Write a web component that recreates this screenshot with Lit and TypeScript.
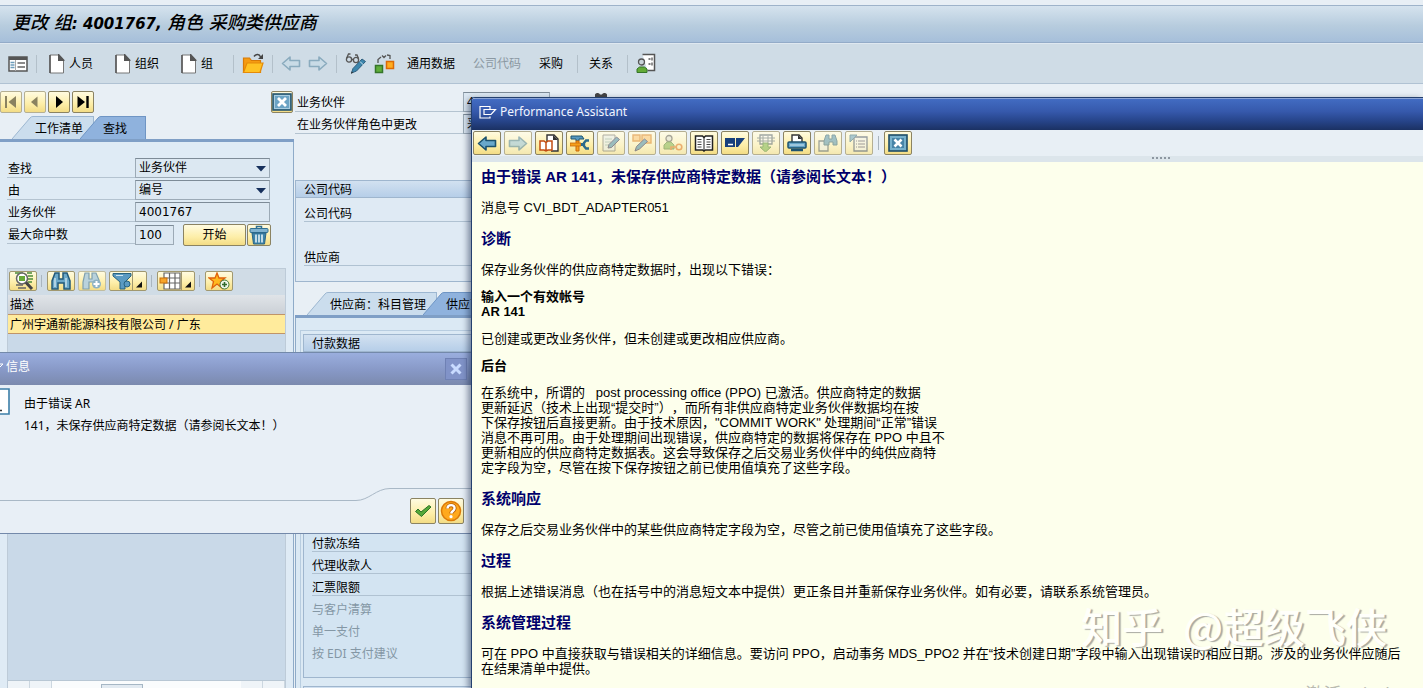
import { LitElement, html, svg, css, TemplateResult } from "lit";
import { customElement, property } from "lit/decorators.js";
import { classMap } from "lit/directives/class-map.js";

const leftArrow = (fill: string, stroke: string) => svg`<path d="M1.5 8.500 9 2v3.500h9.500v6H9V15z" fill=${fill} stroke=${stroke} stroke-width="1.600" stroke-linejoin="round"/>`;
const rightArrow = (fill: string, stroke: string) => svg`<path d="M18.500 8.500 11 2v3.500H1.500v6H11V15z" fill=${fill} stroke=${stroke} stroke-width="1.600" stroke-linejoin="round"/>`;

const glyphs: Record<string, { w: number; h: number; art: unknown }> = {
  list: { w: 20, h: 18, art: svg`<rect x="1" y="2" width="18" height="14" fill="#fff" stroke="#555" stroke-width="1.500"/><rect x="1" y="2" width="18" height="3" fill="#555"/><path d="M2.500 7.500h4M2.500 10h4M2.500 12.500h4" stroke="#6d9cba" stroke-width="1.500"/><path d="M7.500 5v11" stroke="#aaa"/><path d="M9.500 8h7.500M9.500 12h7.500" stroke="#666" stroke-width="1.500"/>` },
  doc: { w: 16, h: 20, art: svg`<path d="M1 1h8.500l5 5V19H1z" fill="#fff" stroke="#777" stroke-width="1"/><path d="M1 1v18" stroke="#555" stroke-width="1.500"/><path d="M9 0h1l5.500 6v1H9z" fill="#555"/>` },
  folder: { w: 22, h: 22, art: svg`<path d="M1.500 19.500V5h6l2 2.500h9v12z" fill="#f59b12" stroke="#d87a07" stroke-width="1.200"/><path d="M1.500 19.500 5 10h16l-3 9.500z" fill="#ffc223" stroke="#e58a08" stroke-width="1.200"/><path d="M12 3.500c2-3 5.500-2.500 6.500.5" fill="none" stroke="#444" stroke-width="1.400"/><path d="M21 1v5h-5z" fill="#444"/>` },
  prev: { w: 20, h: 17, art: leftArrow("#c9dbe6", "#8aabbe") },
  next: { w: 20, h: 17, art: rightArrow("#c9dbe6", "#8aabbe") },
  toggle: { w: 22, h: 22, art: svg`<g fill="none" stroke="#555" stroke-width="1.300"><circle cx="4" cy="6.500" r="2.600"/><circle cx="11" cy="7" r="2.600"/><path d="M1.500 5.500 3.500 1h2M13.500 5.500 12 2h-2M6.500 6.500h2"/></g><path d="M6.500 20 8 15.500 17 6l3.500 2.500-9 9.500z" fill="#3c86ad" stroke="#2d5d7c"/><path d="M15 8.500 18.500 12" stroke="#cfe4ef"/><path d="M6 21l.6-2.500 1.500 1z" fill="#333"/>` },
  relate: { w: 22, h: 22, art: svg`<rect x="1.500" y="12.500" width="7" height="7" fill="#5fae3a" stroke="#35752a" stroke-width="1.500"/><rect x="12.500" y="8.500" width="7" height="7" fill="#ffad1f" stroke="#dc6a05" stroke-width="1.500"/><path d="M4 10V6.500l3-2.500M8 2.500l2 2 2-2M13 2l3 .5V6" fill="none" stroke="#555" stroke-width="1.300"/>` },
  person: { w: 20, h: 22, art: svg`<path d="M6.500 1.500h12v16h-7" fill="#fff" stroke="#555" stroke-width="1.500"/><path d="M12.500 6h2M12.500 11h2M16 4.500v3M16 9.500v3" stroke="#555" stroke-width="1.300"/><circle cx="5.500" cy="9" r="3" fill="#c9d4da" stroke="#555" stroke-width="1.300"/><path d="M1 19v-3l2.500-2h5l2.500 2v3.500H1z" fill="#63ab37" stroke="#35752a"/>` },
  first: { w: 16, h: 16, art: svg`<path d="M3 2v12" stroke="#8a8260" stroke-width="2"/><path d="M13 2v12L5.500 8z" fill="#8a8260"/>` },
  back: { w: 16, h: 16, art: svg`<path d="M10.500 2.500v11L4 8z" fill="#8a8260"/>` },
  forward: { w: 16, h: 16, art: svg`<path d="M5 2v12l7-6z" fill="#000"/>` },
  last: { w: 16, h: 16, art: svg`<path d="M2.500 2v12L10 8z" fill="#000"/><path d="M12.500 2v12" stroke="#000" stroke-width="2.400"/>` },
  close: { w: 20, h: 18, art: svg`<rect x="1" y="1" width="18" height="16" fill="#6ba3c4" stroke="#27566f" stroke-width="1.600"/><rect x="2.500" y="2.500" width="15" height="13" fill="none" stroke="#a9cde0"/><path d="M6 5 14 13M14 5 6 13" stroke="#fff" stroke-width="2.800"/>` },
  trash: { w: 20, h: 20, art: svg`<path d="M7.500 3.500V1.500h5v2" fill="none" stroke="#2f6f92" stroke-width="1.500"/><rect x="1" y="3.500" width="18" height="4" rx="1" fill="#7fb2cf" stroke="#2f6f92"/><path d="M3 8h14l-1.500 11H4.500z" fill="#3d83a9" stroke="#2a6485"/><path d="M7 9.500v8M10 9.500v8M13 9.500v8" stroke="#e3f0f6" stroke-width="1.600"/>` },
  detail: { w: 22, h: 18, art: svg`<path d="M3 1h8M15 1h5M16 4h5M16 7h5M16 10h4" stroke="#4c8c3a" stroke-width="1.300"/><circle cx="10" cy="6.500" r="5.500" fill="#fff" stroke="#666" stroke-width="1.500"/><rect x="7" y="4" width="6" height="5" fill="#67a939"/><path d="M14 10.500 20 17" stroke="#444" stroke-width="3"/><path d="M4 13h7M6 16h8" stroke="#666" stroke-width="1.500"/>` },
  find: { w: 20, h: 18, art: svg`<path d="M4 1h4v6h4V1h4l3 8v8h-6v-6H7v6H1V9z" fill="#6ba8c9" stroke="#23597a" stroke-width="1.500"/><path d="M4 6v9M15 6v9" stroke="#c5dfec" stroke-width="1.500"/>` },
  findNext: { w: 20, h: 18, art: svg`<path d="M3 1h4v6h3V1h4l3 7v3h-4l-2-1H7v7H1v-7z" fill="#b9d2dc" stroke="#7fa0ae" stroke-width="1.200"/><circle cx="14.500" cy="12" r="4.500" fill="#8eb3c4"/><path d="M14.500 9v6M11.500 12h6" stroke="#fff" stroke-width="2"/>` },
  filter: { w: 20, h: 18, art: svg`<path d="M1 1.500h18v2.500l-6 6v7H8v-7L1 4z" fill="#5b9ac2" stroke="#28627f"/><path d="M4 3.500h7" stroke="#cfe6f2"/><circle cx="15" cy="12" r="3" fill="#5b9ac2" stroke="#28627f"/>` },
  layout: { w: 22, h: 18, art: svg`<path d="M5 1h16v16H5zM5 6h16M5 11h16M10.500 1v16M16 1v16" fill="#fff" stroke="#666" stroke-width="1.200"/><rect x="1" y="6" width="7" height="5" fill="#f6a52a" stroke="#c96f0a"/>` },
  corner: { w: 10, h: 18, art: svg`<path d="M8.500 9.500v6h-6z" fill="#111"/>` },
  star: { w: 22, h: 18, art: svg`<path d="m9 1 2 5h6l-4.500 3.500L14 16 9 12l-5 4 1.500-6.500L1 6h6z" fill="#ffb91f" stroke="#e0620b" stroke-width="1.300"/><circle cx="16.500" cy="12.500" r="4.500" fill="#eef5ea" stroke="#3f7a35"/><path d="M16.500 10v5M14 12.500h5" stroke="#2f6a2b" stroke-width="1.600"/>` },
  arrowL: { w: 20, h: 17, art: leftArrow("#69a8cb", "#1d526e") },
  arrowR: { w: 20, h: 17, art: rightArrow("#8fc0de", "#3d7796") },
  help: { w: 20, h: 18, art: svg`<path d="M8 8V1h7l4 4v12h-7" fill="#fff" stroke="#333" stroke-width="1.400"/><path d="M14 1v5h5z" fill="#333"/><path d="M1 7h4l2 1.500L9 7h4v9H9l-2 1-2-1H1zM7 8.500V17" fill="#fff" stroke="#c24b12" stroke-width="1.500"/>` },
  tools: { w: 20, h: 18, art: svg`<path d="M1 2h11l2 3H9v2H6V5H1z" fill="#5798bd" stroke="#1f5673"/><path d="M6 7h3v10H6z" fill="#f6a01a" stroke="#c8680a"/><path d="M0 9h11v3H0z" fill="#f6a01a" stroke="#c8680a" stroke-width=".8"/><path d="M19 6.500h-3L14 9v3l2 2.500h3" fill="none" stroke="#2c6a8b" stroke-width="2.400"/><path d="M11 10.500h3" stroke="#2c6a8b" stroke-width="3"/>` },
  edit: { w: 20, h: 18, art: svg`<path d="M2 1h12v16H2z" fill="#e6edee" stroke="#666"/><path d="M4 5h7M4 8h6M4 11h4" stroke="#8aa"/><path d="M7 14 8 10.500 15.500 3l3 2.500-8 8z" fill="#3c86ad" stroke="#225"/>` },
  note: { w: 20, h: 18, art: svg`<path d="M1 1h7v6H1zM10 1h9v8h-9z" fill="#fbc070" stroke="#d77a18" stroke-width="1.400"/><path d="M3 17 4.500 12.500 12.500 5l3 2.500-8 7.500z" fill="#3c86ad" stroke="#225"/>` },
  userKey: { w: 20, h: 18, art: svg`<circle cx="6" cy="4.500" r="3" fill="#dfe3da" stroke="#555" stroke-width="1.300"/><path d="M1 15V11l3-3h4l3 3v4z" fill="#7bb24e" stroke="#4a7b35"/><circle cx="16" cy="13" r="2.800" fill="none" stroke="#dd6d1b" stroke-width="1.600"/><path d="M13 13H8v3" stroke="#dd6d1b" stroke-width="1.600" fill="none"/>` },
  book: { w: 20, h: 18, art: svg`<path d="M1.500 2h7l1.500 1.500L11.500 2h7v14h-7L10 17l-1.500-1h-7z" fill="#fff" stroke="#222" stroke-width="1.500"/><path d="M10 3v13" stroke="#222"/><path d="M3.500 5.500h4M3.500 8h4M3.500 10.500h4M3.500 13h4M12.500 5.500h4M12.500 8h4M12.500 10.500h4M12.500 13h4" stroke="#444"/>` },
  term: { w: 20, h: 18, art: svg`<path d="M0 4h10v9H0zM11 4h9L13 13h-2z" fill="#173f7d"/><path d="M3 10.500h5" stroke="#fff" stroke-width="1.500"/>` },
  send: { w: 20, h: 18, art: svg`<path d="M4 1h12v9H4z" fill="#fff" stroke="#456" stroke-width="1.300"/><path d="M1 4h18M1 7h18M7 2v8M12 2v8" stroke="#567"/><path d="M7 9h5v4h3l-5.500 5L4 13h3z" fill="#74b44c" stroke="#3d7a2f"/>` },
  print: { w: 20, h: 18, art: svg`<path d="M5 9V1h7l3 3v5" fill="#fff" stroke="#333" stroke-width="1.400"/><path d="M11 1v4h4z" fill="#333"/><rect x="1" y="8" width="18" height="6" rx="1" fill="#66a5c8" stroke="#1d526e" stroke-width="1.500"/><path d="M4 16h12" stroke="#1d526e" stroke-width="2.400"/><path d="M3 11h14" stroke="#d5e9f2"/>` },
  search: { w: 20, h: 18, art: svg`<path d="M1 7h9v10H1z" fill="#eef2f0" stroke="#456" stroke-width="1.300"/><path d="M8 1h3v4h3V1h3l2 6v4h-4V8h-4v3H6V7z" fill="#4a8db3" stroke="#1f5673"/>` },
  outline: { w: 20, h: 18, art: svg`<path d="M5 3h13v14H5z" fill="#f2f4f0" stroke="#346" stroke-width="1.300"/><path d="M9 7h7M9 10h7M9 13h7M7 7h1M7 10h1M7 13h1" stroke="#446"/><path d="M1 1h7L1 8z" fill="#5b9ac2" stroke="#28627f"/>` },
  exit: { w: 20, h: 18, art: svg`<rect x="1" y="1" width="18" height="16" fill="#77b1cc" stroke="#1d4c66" stroke-width="1.600"/><rect x="4" y="4" width="12" height="10" fill="#4784a7"/><path d="m6.500 5.500 7 7M13.500 5.500l-7 7" stroke="#fff" stroke-width="2.600"/>` },
  dialogClose: { w: 14, h: 14, art: svg`<path d="M2.500 2.500 11.500 11.500M11.500 2.500l-9 9" stroke="#c9dbff" stroke-width="3"/>` },
  ok: { w: 18, h: 18, art: svg`<path d="m1.500 9.500 2.500-2.500 3 3L15 3.500l2 1.500-9.500 9.500z" fill="#55a838" stroke="#2c7427"/>` },
  question: { w: 22, h: 22, art: svg`<circle cx="11" cy="11" r="9.500" fill="#ffa91d" stroke="#dc7a08" stroke-width="1.500"/><path d="M7.500 8.500c0-4.500 7.500-4.500 7 0 0 2.500-3 2.500-3.300 5" fill="none" stroke="#b55c05" stroke-width="4"/><path d="M7.500 8.500c0-4.500 7.500-4.500 7 0 0 2.500-3 2.500-3.300 5" fill="none" stroke="#fff" stroke-width="2.400"/><circle cx="11" cy="16.700" r="1.600" fill="#fff"/>` },
  windowMark: { w: 18, h: 14, art: svg`<path d="M11 11.500v1.500H1V1.500h10V4" fill="none" stroke="#fff" stroke-width="1.200"/><path d="M5 4.500h11.500L12 9.500H5z" fill="none" stroke="#fff" stroke-width="1.200"/>` },
  lens: { w: 16, h: 14, art: svg`<path d="M2 2.500c1-2 4-2 5 0h2c1-2 4-2 5 0v11H9V7H7v6H2z" fill="#444"/>` },
  message: { w: 10, h: 28, art: svg`<path d="M-4 1H9v25H-4" fill="#fff" stroke="#3c7fa8" stroke-width="1.600"/><path d="M0 22.500h2" stroke="#333" stroke-width="1.500"/>` },
  caret: { w: 12, h: 8, art: svg`<path d="M1 1h10L6 6.500z" fill="#16305c"/>` },
};

function glyph(name: string): TemplateResult {
  const g = glyphs[name];
  return html`<svg class="glyph" width=${g.w} height=${g.h} viewBox="0 0 ${g.w} ${g.h}" aria-hidden="true">${g.art}</svg>`;
}

const base = css`
  * { box-sizing: border-box; }
  svg { display: block; flex: none; }
  button, input, select { font: inherit; color: inherit; margin: 0; border-radius: 0; }
  button { padding: 0; background: none; border: 0; white-space: nowrap; }
  .key {
    display: inline-flex; align-items: center; justify-content: center; flex: none;
    height: 22px; width: 22px; border: 1px solid #8b8362; border-radius: 2px;
    background: linear-gradient(#fffbe0, #fdeea8 60%, #f3dc85);
  }
  .key.dim { border-color: #b5af92; }
`;

interface TabItem { label: string; active?: boolean }

@customElement("sap-tabs")
class SapTabs extends LitElement {
  @property({ attribute: false }) items: TabItem[] = [];
  static styles = [base, css`
    :host { display: flex; height: 26px; border-bottom: 3px solid #7f9fc6; overflow: hidden; }
    .tab { display: flex; height: 23px; position: relative; }
    .tab + .tab { margin-left: -14px; }
    .face { padding: 2px 10px 0 2px; line-height: 20px; border: 1px solid #9db7d1; border-width: 1px 1px 0 0; background: #cbdded; }
    .active .face { background: #8fb2dd; border-color: #6f95c4; padding-right: 18px; }
    .slope { fill: #cbdded; stroke: #9db7d1; }
    .active .slope { fill: #8fb2dd; stroke: #6f95c4; }
  `];
  render() {
    return this.items.map(t => html`<button class=${classMap({ tab: true, active: !!t.active })}>
      <svg width="21" height="23" aria-hidden="true"><path class="slope" d="M0 23 18 2q1-1.500 3-1.500h2V23"/></svg>
      <span class="face">${t.label}</span></button>`);
  }
}

@customElement("sap-toolbar")
class SapToolbar extends LitElement {
  static styles = [base, css`
    :host { display: flex; align-items: center; height: 41px; background: #cfdce6; border-bottom: 1px solid #b0c2d3; border-top: 1px solid #dfe8f0; }
    .group { display: flex; align-items: center; height: 18px; padding: 0 8px; gap: 7px; border-left: 1px solid #b3c0ca; }
    .group:first-child { border-left: 0; }
    .docs { gap: 22px; padding: 0 20px 0 12px; }
    .tight { padding-right: 0; }
    .words { padding: 0 14px 0 11px; gap: 18px; border: 0; }
    .lined { border-left: 1px solid #b3c0ca; }
    button { display: flex; align-items: center; gap: 4px; line-height: 20px; }
    button:disabled { color: #8b98a2; }
  `];
  render() {
    return html`
      <div class="group"><button aria-label="列表">${glyph("list")}</button></div>
      <div class="group docs">${["人员", "组织", "组"].map(t => html`<button>${glyph("doc")}${t}</button>`)}</div>
      <div class="group"><button aria-label="打开">${glyph("folder")}</button></div>
      <div class="group"><button aria-label="后退">${glyph("prev")}</button><button aria-label="前进">${glyph("next")}</button></div>
      <div class="group tight"><button aria-label="显示/更改">${glyph("toggle")}</button><button aria-label="关系图">${glyph("relate")}</button></div>
      <div class="group words"><button>通用数据</button><button disabled>公司代码</button><button>采购</button></div>
      <div class="group words lined"><button>关系</button></div>
      <div class="group"><button aria-label="合作伙伴">${glyph("person")}</button></div>`;
  }
}

@customElement("partner-search")
class PartnerSearch extends LitElement {
  static styles = [base, css`
    :host { display: flex; flex-direction: column; min-width: 0; }
    .nav { display: flex; gap: 2px; padding: 7px 1px 3px 0; }
    .nav .end { margin-left: auto; }
    sap-tabs { padding-left: 12px; flex: none; }
    .panel { flex: 1; display: flex; flex-direction: column; background: #dfebf5; border-right: 1px solid #8fabc8; padding: 16px 7px 0 7px; }
    .form { display: grid; gap: 2px; }
    .row { display: grid; grid-template-columns: 128px 135px; height: 20px; }
    .row label { border-bottom: 1px solid #b4c3d0; padding-left: 1px; line-height: 22px; height: 20px; }
    .field { border: 1px solid #9caab6; border-top-color: #7d8b97; background: #dce8f2; height: 20px; width: 100%; padding: 0 3px; outline: none; }
    input.field { font-family: "DejaVu Sans", sans-serif; }
    .pick { position: relative; display: block; }
    .pick select { appearance: none; line-height: 18px; }
    .pick svg { position: absolute; right: 3px; top: 7px; }
    .limit { display: flex; align-items: center; gap: 1px; }
    .limit .field { width: 39px; margin-right: 8px; flex: none; }
    .start { width: 63px; }
    .trash { width: 24px; }
    .results { flex: 1; display: flex; flex-direction: column; margin-top: 24px; background: #c9d9e8; border: 1px solid #bdcbd8; border-bottom: 0; }
    .bar { display: flex; height: 26px; flex: none; gap: 3px; padding: 2px 0 0 1px; background: #d0dce6; }
    .bar .key { width: 28px; height: 20px; border-color: #a1986f; }
    .bar .key.dim { border-color: #c1bda0; }
    .bar .key.split { width: 38px; }
    .split svg + svg { border-left: 1px solid #a1986f; width: 12px; }
    .bar i { width: 1px; height: 12px; background: #aab6c0; margin: 4px 2px 0 1px; }
    table { border-collapse: collapse; width: 100%; }
    th { text-align: left; font-weight: normal; height: 19px; padding: 0 2px; line-height: 19px; background: linear-gradient(#e0e4e8, #cbd0d6); }
    td { height: 19px; padding: 0 2px; line-height: 17px; background: #ffeb9c; border: 1px solid #c09468; border-width: 1px 0; }
    .scroll { margin-top: auto; height: 8px; flex: none; display: flex; background: #fafcfd; border-top: 1px solid #b8c7d4; }
    .scroll b { width: 22px; border-right: 1px solid #ccd7e0; background: #eff4f8; }
    .scroll u { width: 42px; margin: 3px auto 0 49px; border: 1px solid #a6b7c5; border-bottom: 0; background: #e2eaf1; }
  `];
  render() {
    const nav: [string, string, boolean][] = [["first", "第一个", true], ["back", "上一个", true], ["forward", "下一个", false], ["last", "最后一个", false]];
    return html`
      <div class="nav">
        ${nav.map(([i, l, d]) => html`<button class=${classMap({ key: true, dim: d })} aria-label=${l}>${glyph(i)}</button>`)}
        <button class="key end" aria-label="关闭">${glyph("close")}</button>
      </div>
      <sap-tabs .items=${[{ label: "工作清单" }, { label: "查找", active: true }]}></sap-tabs>
      <div class="panel">
        <div class="form">
          <div class="row"><label for="kind">查找</label><span class="pick"><select class="field" id="kind"><option>业务伙伴</option></select>${glyph("caret")}</span></div>
          <div class="row"><label for="by">由</label><span class="pick"><select class="field" id="by"><option>编号</option></select>${glyph("caret")}</span></div>
          <div class="row"><label for="bp">业务伙伴</label><input class="field" id="bp" .value=${"4001767"}></div>
          <div class="row"><label for="max">最大命中数</label><span class="limit"><input class="field" id="max" .value=${"100"}><button class="key start">开始</button><button class="key trash" aria-label="删除">${glyph("trash")}</button></span></div>
        </div>
        <div class="results">
          <div class="bar">
            <button class="key" aria-label="明细">${glyph("detail")}</button><i></i>
            <button class="key" aria-label="查找">${glyph("find")}</button>
            <button class="key dim" aria-label="查找下一个">${glyph("findNext")}</button>
            <button class="key split" aria-label="过滤">${glyph("filter")}${glyph("corner")}</button><i></i>
            <button class="key split" aria-label="布局">${glyph("layout")}${glyph("corner")}</button><i></i>
            <button class="key" aria-label="收藏">${glyph("star")}</button>
          </div>
          <table><thead><tr><th>描述</th></tr></thead><tbody><tr><td>广州宇通新能源科技有限公司 / 广东</td></tr></tbody></table>
          <div class="scroll"><b></b><b></b><u></u><b></b><b></b></div>
        </div>
      </div>`;
  }
}

@customElement("partner-data")
class PartnerData extends LitElement {
  static styles = [base, css`
    :host { display: flex; flex-direction: column; min-width: 0; padding: 8px 0 0 1px; }
    .head { display: grid; gap: 2px; margin-bottom: 46px; flex: none; }
    .row { display: flex; height: 20px; gap: 0; }
    .row label { width: 168px; flex: none; padding-left: 2px; border-bottom: 1px solid #b4c3d0; line-height: 22px; }
    .row input { width: 87px; margin-right: 43px; border: 1px solid #9caab6; border-top-color: #7d8b97; background: #dce8f2; padding: 0 3px; outline: none; }
    .box { border: 1px solid #9fb6ce; background: #dfeaf4; }
    .cap { height: 17px; line-height: 17px; padding-left: 8px; background: linear-gradient(#d2e1f0, #b6cee8); border-bottom: 1px solid #9fb6ce; }
    .company { height: 102px; flex: none; margin-bottom: 10px; }
    .company p, .rows p { margin: 0 0 0 8px; height: 22px; line-height: 27px; border-bottom: 1px solid #b0c2d2; }
    .company p { margin-top: 2px; }
    .company p + p { margin-top: 22px; }
    sap-tabs { padding-left: 12px; flex: none; }
    .panel { flex: 1; border-left: 1px solid #8fabc8; background: #dbe9f4; padding: 12px 0 0 4px; }
    .outer { border: 1px solid #b8cde0; border-width: 1px 0 0 1px; padding: 3px 0 0 2px; }
    .rows { padding: 178px 0 15px; background: #d3e4f2; }
    .inner + .inner { margin-top: 8px; }
    .rows p.off { color: #8497a5; border: 0; }
  `];
  render() {
    return html`
      <div class="head">
        <div class="row"><label for="partner">业务伙伴</label><input id="partner" .value=${"4001767"}>${glyph("lens")}</div>
        <div class="row"><label for="role">在业务伙伴角色中更改</label><input id="role" .value=${"采购类供应商"}></div>
      </div>
      <section class="box company"><div class="cap">公司代码</div><p>公司代码</p><p>供应商</p></section>
      <sap-tabs .items=${[{ label: "供应商：科目管理" }, { label: "供应商：支付交易", active: true }]}></sap-tabs>
      <div class="panel"><div class="outer">
        <section class="box inner"><div class="cap">付款数据</div>
          <div class="rows">
            ${["付款冻结", "代理收款人", "汇票限额"].map(t => html`<p>${t}</p>`)}
            ${["与客户清算", "单一支付", "按 EDI 支付建议"].map(t => html`<p class="off">${t}</p>`)}
          </div>
        </section>
        <section class="box inner"><div class="cap"></div></section>
      </div></div>`;
  }
}

@customElement("info-dialog")
class InfoDialog extends LitElement {
  static styles = [base, css`
    :host { display: flex; flex-direction: column; background: #e8eff6; border: 1px solid #7389aa; border-width: 1px 0; }
    header { display: flex; align-items: center; height: 32px; padding: 0 4px 4px 0; gap: 3px; color: #fff; background: linear-gradient(#9aaede, #8798c6 55%, #7b8aae); }
    header button { margin: 4px 0 0 auto; width: 22px; height: 22px; display: grid; place-items: center; border: 1px solid #6f81b4; background: #8193c8; }
    .body { display: flex; gap: 14px; padding: 3px 0 0; height: 103px; }
    .body p { margin: 5px 0 0; line-height: 22px; }
    footer { position: relative; display: flex; justify-content: flex-end; gap: 2px; padding: 10px 7px 9px 0; }
    .curve { position: absolute; left: 0; right: 0; top: 0; width: 100%; height: 14px; }
    .key { width: 26px; height: 26px; }
  `];
  render() {
    return html`
      <header><svg width="3" height="8" aria-hidden="true"><path d="M0 1h3L0 4" fill="none" stroke="#fff"/></svg>信息<button aria-label="关闭">${glyph("dialogClose")}</button></header>
      <div class="body">${glyph("message")}<p>由于错误 AR<br>141，未保存供应商特定数据（请参阅长文本！）</p></div>
      <footer>
        <svg class="curve" viewBox="0 0 471 14" preserveAspectRatio="none" aria-hidden="true"><path d="M0 12.500h356c13 0 20-12 34-12h81" fill="none" stroke="#a9b8c6"/></svg>
        <button class="key" aria-label="继续">${glyph("ok")}</button>
        <button class="key" aria-label="帮助">${glyph("question")}</button>
      </footer>`;
  }
}

@customElement("performance-assistant")
class PerformanceAssistant extends LitElement {
  static styles = [base, css`
    :host { display: flex; flex-direction: column; border-left: 1px solid #24406e; border-top: 1px solid #24406e; border-radius: 4px 0 0 0; background: #fdffec; box-shadow: -3px 2px 6px rgba(20, 35, 70, .5); overflow: hidden; }
    header { display: flex; align-items: center; gap: 3px; height: 32px; flex: none; padding: 0 7px 5px; color: #f1f5ff; border-top: 1px solid #8aa3d6; background: linear-gradient(#426cc2, #3659ac 40%, #27458b 70%, #1b3163); }
    .tools { display: flex; align-items: center; gap: 3px; height: 26px; flex: none; padding-left: 1px; background: #e8eff5; }
    .key { width: 28px; height: 24px; }
    .key.dim svg { opacity: .5; }
    .key.dim { background: linear-gradient(#fdfbe8, #fbf3c8 60%, #f4e8b0); }
    .tools i { width: 1px; height: 14px; background: #a9b4bd; margin: 0 2px; }
    .grip { height: 6px; flex: none; background: #dce5eb; display: flex; justify-content: center; padding: 1px 0 0 427px; gap: 2px; }
    .grip b { width: 2px; height: 2px; background: #8d97a1; }
    article { flex: 1; padding: 5px 22px 0 9px; font: 13px/15px "Liberation Sans", "Noto Sans CJK SC", sans-serif; text-spacing-trim: space-all; color: #000; white-space: nowrap; }
    h2 { margin: 14px 0; font-size: 15px; line-height: 19px; color: #00006b; }
    h2:first-child { margin-top: 0; }
    p { margin: 12px 0; }
  `];
  render() {
    const tools: [string, string, boolean][] = [
      ["arrowL", "后退", false], ["arrowR", "前进", true], ["help", "应用帮助", false], ["tools", "定制", false], ["edit", "编辑", true],
      ["note", "注释", true], ["userKey", "权限", true], ["book", "文档", false], ["term", "术语", false], ["send", "发送", true],
      ["print", "打印", false], ["search", "查找", true], ["outline", "技术信息", true],
    ];
    return html`
      <header>${glyph("windowMark")}Performance Assistant</header>
      <div class="tools">
        ${tools.map(([i, l, d]) => html`<button class=${classMap({ key: true, dim: d })} aria-label=${l}>${glyph(i)}</button>`)}
        <i></i><button class="key" aria-label="关闭">${glyph("exit")}</button>
      </div>
      <div class="grip">${[0, 1, 2, 3, 4].map(() => html`<b></b>`)}</div>
      <article>
        <h2>由于错误 AR 141，未保存供应商特定数据（请参阅长文本！）</h2>
        <p>消息号 CVI_BDT_ADAPTER051</p>
        <h2>诊断</h2>
        <p>保存业务伙伴的供应商特定数据时，出现以下错误：</p>
        <p><strong>输入一个有效帐号<br>AR 141</strong></p>
        <p>已创建或更改业务伙伴，但未创建或更改相应供应商。</p>
        <p><strong>后台</strong></p>
        <p>在系统中，所谓的&nbsp;&nbsp; post processing office (PPO) 已激活。供应商特定的数据<br>更新延迟（技术上出现“提交时”），而所有非供应商特定业务伙伴数据均在按<br>下保存按钮后直接更新。由于技术原因，"COMMIT WORK" 处理期间“正常”错误<br>消息不再可用。由于处理期间出现错误，供应商特定的数据将保存在 PPO 中且不<br>更新相应的供应商特定数据表。这会导致保存之后交易业务伙伴中的纯供应商特<br>定字段为空，尽管在按下保存按钮之前已使用值填充了这些字段。</p>
        <h2>系统响应</h2>
        <p>保存之后交易业务伙伴中的某些供应商特定字段为空，尽管之前已使用值填充了这些字段。</p>
        <h2>过程</h2>
        <p>根据上述错误消息（也在括号中的消息短文本中提供）更正条目并重新保存业务伙伴。如有必要，请联系系统管理员。</p>
        <h2>系统管理过程</h2>
        <p>可在 PPO 中直接获取与错误相关的详细信息。要访问 PPO，启动事务 MDS_PPO2 并在“技术创建日期”字段中输入出现错误的相应日期。涉及的业务伙伴应随后<br>在结果清单中提供。</p>
      </article>`;
  }
}

@customElement("app-root")
class AppRoot extends LitElement {
  static styles = [base, css`
    :host { display: flex; flex-direction: column; position: relative; height: 100vh; min-height: 600px; overflow: hidden; background: #e8eff5; color: #000; font: 12px/16px "Noto Sans", "Noto Sans CJK SC", sans-serif; }
    .title { margin: 5px 0 0; height: 38px; flex: none; padding-left: 12px; border-top: 1px solid #9eb3ca; border-bottom: 1px solid #93abc8; background: linear-gradient(#d5e3ee, #b7ccde 55%, #a6bfda); font: italic bold 15px/34px "DejaVu Sans", "Noto Sans CJK SC", sans-serif; }
    .title span { font-size: 18px; font-weight: 500; }
    sap-toolbar { flex: none; }
    main { flex: 1; display: grid; grid-template: minmax(0, 1fr) / 294px minmax(0, 1fr); min-height: 0; overflow: hidden; }
    info-dialog { position: absolute; left: 0; top: 352px; width: 471px; }
    performance-assistant { position: absolute; left: 471px; right: 0; top: 97px; bottom: 0; }
    .mark { position: absolute; right: 36px; bottom: 39px; display: flex; gap: 20px; font: 500 41px/48px "Noto Sans CJK SC", sans-serif; color: #fffffa; text-shadow: 2px 1px 1px #a9aaa2; white-space: nowrap; }
    .activate { position: absolute; right: 0; bottom: -18px; font-size: 18px; line-height: 24px; color: #b9bab0; white-space: nowrap; }
  `];
  connectedCallback() {
    super.connectedCallback();
    this.lang = "zh-CN";
  }
  render() {
    return html`
      <h1 class="title"><span>更改 组</span>: 4001767, <span>角色 采购类供应商</span></h1>
      <sap-toolbar></sap-toolbar>
      <main><partner-search></partner-search><partner-data></partner-data></main>
      <info-dialog role="dialog" aria-label="信息"></info-dialog>
      <performance-assistant role="dialog" aria-label="Performance Assistant"></performance-assistant>
      <div class="mark"><span>知乎</span><span>@超级飞侠</span></div>
      <div class="activate">激活 Windows</div>`;
  }
}
